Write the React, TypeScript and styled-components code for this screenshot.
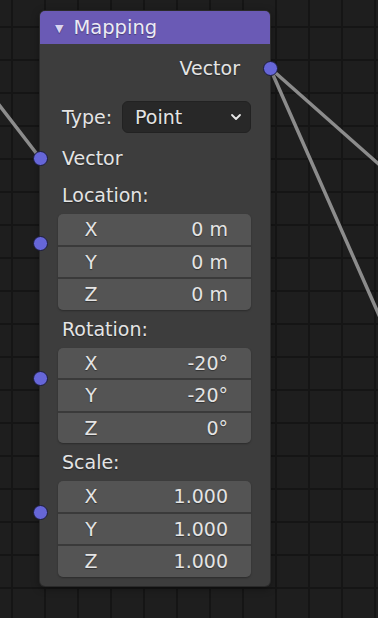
import styled, { createGlobalStyle } from "styled-components";

const GlobalStyle = createGlobalStyle`
  html, body {
    margin: 0;
    padding: 0;
    background: #1d1d1d;
  }
  body {
    font-family: "DejaVu Sans", "Noto Sans", sans-serif;
  }
`;

const Canvas = styled.div`
  position: relative;
  width: 378px;
  height: 618px;
  overflow: hidden;
  background-color: #1e1e1e;
  background-image: linear-gradient(#151515 2px, transparent 2px),
    linear-gradient(90deg, #151515 2px, transparent 2px);
  background-size: 33px 33px;
  background-position: 11px 26px;
`;

const Links = styled.svg`
  position: absolute;
  left: 0;
  top: 0;
`;

const Node = styled.div`
  position: absolute;
  left: 40px;
  top: 11px;
  width: 230px;
  height: 575px;
  background: #3d3d3d;
  border-radius: 5px;
  box-shadow: 0 0 0 1px #2a2a2a, 0 2px 8px rgba(0, 0, 0, 0.45);
  display: flex;
  flex-direction: column;
`;

const Header = styled.div`
  height: 33px;
  background: #6a5ab5;
  border-radius: 5px 5px 0 0;
  display: flex;
  align-items: center;
  padding-left: 15px;
  gap: 10px;
  color: #ecebf5;
  font-size: 19.5px;
  text-shadow: 0 1px 1px rgba(0, 0, 0, 0.35);
`;

const Collapse = styled.span`
  font-size: 11px;
  color: #d9d4f0;
  margin-top: 2px;
`;

const Body = styled.div`
  display: flex;
  flex-direction: column;
  padding-top: 8px;
  color: #e4e4e4;
  font-size: 19px;
  text-shadow: 0 1px 1px rgba(0, 0, 0, 0.4);
`;

const Row = styled.div<{ $align?: "left" | "right"; $mt?: number }>`
  position: relative;
  height: 32px;
  display: flex;
  align-items: center;
  justify-content: ${(p) => (p.$align === "right" ? "flex-end" : "flex-start")};
  padding: ${(p) => (p.$align === "right" ? "0 30px 0 0" : "0 0 0 22px")};
  margin-top: ${(p) => p.$mt ?? 0}px;
`;

const TypeRow = styled.div`
  height: 32px;
  display: flex;
  align-items: center;
  gap: 10px;
  padding-left: 22px;
  margin-top: 17px;
`;

const Select = styled.div`
  width: 129px;
  height: 32px;
  box-sizing: border-box;
  background: #282828;
  border: 1px solid #222;
  border-radius: 6px;
  display: flex;
  align-items: center;
  justify-content: space-between;
  padding: 0 8px 0 12px;
`;

const Chevron = styled.svg`
  display: block;
`;

const Section = styled.div<{ $mt: number }>`
  position: relative;
  display: flex;
  flex-direction: column;
  margin-top: ${(p) => p.$mt}px;
`;

const SectionLabel = styled.div`
  height: 32px;
  display: flex;
  align-items: center;
  padding-left: 22px;
`;

const Fields = styled.div`
  margin: 3px 19px 0 18px;
  background: #3a3a3a;
  border-radius: 5px;
  overflow: hidden;
  display: flex;
  flex-direction: column;
  gap: 2px;
  box-shadow: 0 1px 2px rgba(0, 0, 0, 0.3);
`;

const Field = styled.div`
  height: 30.5px;
  background: #545454;
  display: flex;
  align-items: center;
  justify-content: space-between;
  padding: 0 23px 0 25px;
`;

const Axis = styled.span`
  width: 16px;
  text-align: center;
`;

const Socket = styled.span<{ $side: "left" | "right"; $top: number }>`
  position: absolute;
  ${(p) => p.$side}: -7.5px;
  top: ${(p) => p.$top - 7.5}px;
  width: 13px;
  height: 13px;
  border-radius: 50%;
  background: #6666d8;
  border: 1px solid #1c1c3a;
`;

type Vec = { name: string; socket: number; mt: number; values: string[] };

const sections: Vec[] = [
  { name: "Location:", socket: 64, mt: 5, values: ["0 m", "0 m", "0 m"] },
  { name: "Rotation:", socket: 66, mt: 3, values: ["-20°", "-20°", "0°"] },
  { name: "Scale:", socket: 66, mt: 3, values: ["1.000", "1.000", "1.000"] },
];

const axes = ["X", "Y", "Z"];

export default function App() {
  return (
    <>
      <GlobalStyle />
      <Canvas>
        <Links width={378} height={618}>
          <g stroke="#8c8c8c" strokeWidth={3.5} fill="none" strokeLinecap="round">
            <path d="M -4 101 L 40 158" />
            <path d="M 270 68 L 382 167" />
            <path d="M 270 68 L 382 322" />
          </g>
        </Links>
        <Node>
          <Header>
            <Collapse>▼</Collapse>
            Mapping
          </Header>
          <Body>
            <Row $align="right">
              Vector
              <Socket $side="right" $top={16} />
            </Row>
            <TypeRow>
              Type:
              <Select>
                Point
                <Chevron width="12" height="8" viewBox="0 0 12 8">
                  <path
                    d="M2 2 L6 6 L10 2"
                    stroke="#e8e8e8"
                    strokeWidth="1.8"
                    fill="none"
                    strokeLinecap="round"
                    strokeLinejoin="round"
                  />
                </Chevron>
              </Select>
            </TypeRow>
            <Row $mt={9}>
              Vector
              <Socket $side="left" $top={16} />
            </Row>
            {sections.map((s) => (
              <Section key={s.name} $mt={s.mt}>
                <SectionLabel>{s.name}</SectionLabel>
                <Fields>
                  {s.values.map((v, i) => (
                    <Field key={axes[i]}>
                      <Axis>{axes[i]}</Axis>
                      <span>{v}</span>
                    </Field>
                  ))}
                </Fields>
                <Socket $side="left" $top={s.socket} />
              </Section>
            ))}
          </Body>
        </Node>
      </Canvas>
    </>
  );
}
